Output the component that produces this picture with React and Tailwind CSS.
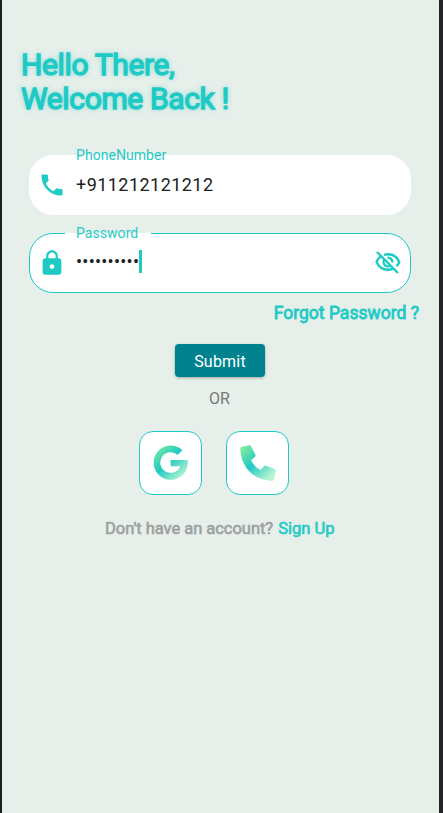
import React from "react";
import { MdLock } from "react-icons/md";

function Phone() {
  return (
    <svg viewBox="0 0 24 24" className="size-7" fill="currentColor">
      <path d="M6.620 10.790c1.440 2.830 3.760 5.140 6.590 6.590l2.200-2.200c.27-.27.67-.36 1.020-.24 1.120.37 2.330.57 3.570.57.55 0 1 .45 1 1V20c0 .55-.45 1-1 1-9.390 0-17-7.610-17-17 0-.55.45-1 1-1h3.500c.55 0 1 .45 1 1 0 1.250.2 2.450.57 3.570.11.35.03.74-.25 1.020l-2.200 2.200z" />
    </svg>
  );
}

function EyeOff() {
  return (
    <svg viewBox="0 0 26 24" className="h-[24px] w-[26px]" fill="none" stroke="#1fcac5" strokeWidth="2.400">
      <path d="M9 4C10.300 3.500 11.600 3.300 13 3.300C18 3.300 22.300 6.200 24.200 11C23.600 12.700 22.700 14 21.500 15.200" />
      <path d="M5.400 5.700C3.700 7.200 2.200 8.900 1.600 11C3.500 15.700 7.700 18.700 13 18.700C14.800 18.700 16.500 18.400 18 17.800" />
      <path d="M9.900 7.900A4.300 4.300 0 0 0 16 14.100" />
      <path d="M12.500 6.700A4.300 4.300 0 0 1 17.300 11.500" />
      <path d="M2 1L23 22" />
    </svg>
  );
}

function GoogleMark() {
  return (
    <svg viewBox="0 0 36 36" className="size-[35px]" fill="none">
      <defs>
        <linearGradient id="g-fill" x1="3" y1="3" x2="32" y2="34" gradientUnits="userSpaceOnUse">
          <stop offset="0" stopColor="#79eba0" />
          <stop offset="0.45" stopColor="#21c9c3" />
          <stop offset="1" stopColor="#c2f8d3" />
        </linearGradient>
      </defs>
      <path d="M30.300 5.400A17.600 17.600 0 1 0 35.600 15.400H18.200V21.800H28A10.600 10.600 0 1 1 25.400 10.300Z" fill="url(#g-fill)" />
    </svg>
  );
}

function CallMark() {
  return (
    <svg viewBox="0 0 36 36" className="size-9" fill="none">
      <defs>
        <linearGradient id="call-fill" x1="2" y1="1" x2="34" y2="35" gradientUnits="userSpaceOnUse">
          <stop offset="0" stopColor="#87ee9f" />
          <stop offset="0.45" stopColor="#21c9c3" />
          <stop offset="0.900" stopColor="#b8f6d2" />
        </linearGradient>
      </defs>
      <path d="M2 1.800L8.800 .3Q10.500 0 11.200 1.500L15.300 9.500Q16 11 14.800 12L11 15.300Q14.300 22 20.700 25L24 21.300Q25.100 20.200 26.500 20.800L34.500 24Q36 24.700 35.700 26.200L34 34.200Q33.600 36 31.800 35.900C13 35 1 22 .3 4Q.2 2.200 2 1.800Z" fill="url(#call-fill)" />
    </svg>
  );
}

function Field({ label, icon, active, children }) {
  return (
    <div className={`relative flex h-[60px] items-center rounded-[24px] border-[1.300px] bg-white pl-[8px] pr-[9px] ${active ? "border-[#1fcac5]" : "border-white"}`}>
      {active && <span className="absolute -top-px left-[35px] h-[2px] w-[86px] bg-white" />}
      <label className="absolute -top-[9px] left-[46px] text-[14px] leading-4 tracking-[0.050px] text-[#1fcac5]">{label}</label>
      <span className="flex w-[28px] justify-center text-[28px] text-[#1fcac5]">{icon}</span>
      {children}
    </div>
  );
}

export default function App() {
  return (
    <main className="flex h-[813px] w-[443px] flex-col border-r-[4px] border-l-2 border-r-[#252428] border-l-[#1e1b22] bg-[#e6efea] font-[Roboto,sans-serif]">
      <h1 className="mt-12 ml-[19px] text-[30px] leading-[34px] font-normal tracking-[-0.360px] text-[#1fcac5] [-webkit-text-stroke:1.400px_#1fcac5] [text-shadow:0_0_5px_#1fcac5a0]">
        Hello There,<br />Welcome Back !
      </h1>
      <section className="mt-[39px] ml-[27px] flex w-[382px] flex-col gap-[18px]">
        <Field label="PhoneNumber" icon={<Phone />}>
          <span className="-mt-px ml-[10px] text-[18px] leading-6 tracking-[0.450px] text-[#202020]">+911212121212</span>
        </Field>
        <Field label="Password" icon={<span className="-mt-px"><MdLock /></span>} active>
          <span className="-mt-[2px] ml-[10px] text-[18px] leading-6 tracking-[0.250px] text-[#202020]">••••••••••</span>
          <span className="-mt-[3px] h-[23px] w-[2.500px] bg-[#1fcac5]" />
          <span className="ml-auto"><EyeOff /></span>
        </Field>
      </section>
      <a className="mt-[10px] mr-[20px] self-end text-[17.500px] leading-5 font-normal tracking-[0.020px] text-[#1fcac5] [-webkit-text-stroke:0.800px_#1fcac5]">Forgot Password ?</a>
      <button className="mt-[21px] ml-[173px] h-[33px] w-[90px] rounded-[4px] bg-[#00838f] pt-[2px] text-[16px] leading-5 tracking-[0.200px] text-white shadow-[0_1px_3px_rgba(0,0,0,0.3)]">Submit</button>
      <p className="mt-[12px] ml-[207px] text-[16px] leading-5 text-[#747876]">OR</p>
      <div className="mt-[22px] ml-[137px] flex gap-6">
        <button className="flex h-16 w-[63px] items-center justify-center rounded-[14px] border-[1.300px] border-[#1fcac5] bg-white pb-px"><GoogleMark /></button>
        <button className="flex h-16 w-[63px] items-center justify-center rounded-[14px] border-[1.300px] border-[#1fcac5] bg-white pb-px"><CallMark /></button>
      </div>
      <p className="mt-[24px] ml-[103px] flex gap-[5px] text-[16.500px] leading-5 font-normal whitespace-nowrap text-[#9da19f] [-webkit-text-stroke:0.600px_currentColor]">
        <span className="tracking-[-0.030px]">Don't have an account?</span>
        <a className="text-[#1fcac5]">Sign Up</a>
      </p>
    </main>
  );
}
